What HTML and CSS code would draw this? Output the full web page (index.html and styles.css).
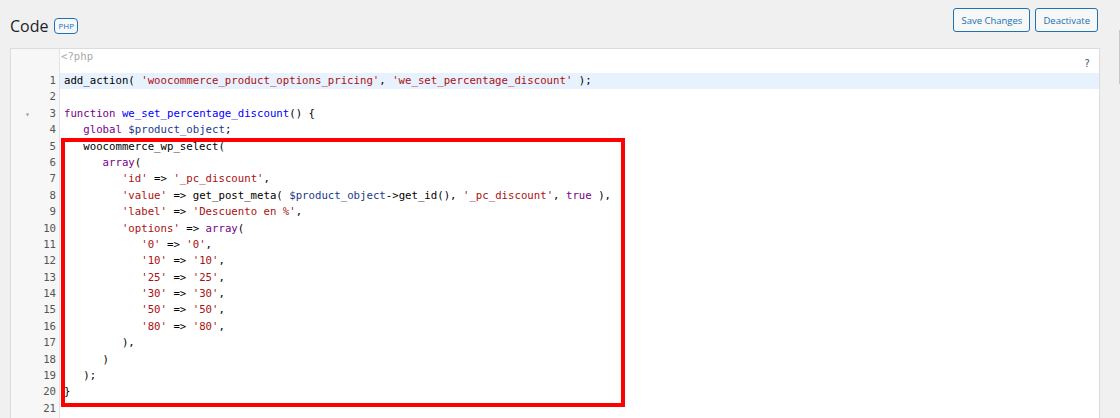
FILE: index.html
```html
<!DOCTYPE html>
<html lang="en">
<head>
    <meta charset="UTF-8">
    <meta name="viewport" content="width=device-width, initial-scale=1.0">
    <title>Code</title>
    <link rel="stylesheet" href="styles.css">
</head>
<body>

<div class="header">
    <div class="title">
        <h1>Code</h1>
        <span class="badge">PHP</span>
    </div>
    <div class="actions">
        <button class="button">Save Changes</button>
        <button class="button">Deactivate</button>
    </div>
</div>

<div class="editor">
    <div class="gutter">
        <div class="gutter-top"></div>
        <div class="num">1</div>
        <div class="num">2</div>
        <div class="num"><span class="fold">&#9662;</span>3</div>
        <div class="num">4</div>
        <div class="num">5</div>
        <div class="num">6</div>
        <div class="num">7</div>
        <div class="num">8</div>
        <div class="num">9</div>
        <div class="num">10</div>
        <div class="num">11</div>
        <div class="num">12</div>
        <div class="num">13</div>
        <div class="num">14</div>
        <div class="num">15</div>
        <div class="num">16</div>
        <div class="num">17</div>
        <div class="num">18</div>
        <div class="num">19</div>
        <div class="num">20</div>
        <div class="num">21</div>
        <div class="num">&nbsp;</div>
    </div>
    <div class="code">
        <div class="code-top">
            <span class="open-tag">&lt;?php</span>
            <span class="help">?</span>
        </div>
        <!-- lineas del snippet -->
        <pre class="line active">add_action( <span class="str">'woocommerce_product_options_pricing'</span>, <span class="str">'we_set_percentage_discount'</span> );</pre>
        <pre class="line"> </pre>
        <pre class="line"><span class="kw">function</span> <span class="def">we_set_percentage_discount</span>() {</pre>
        <pre class="line">   <span class="kw">global</span> <span class="var">$product_object</span>;</pre>
        <pre class="line">   woocommerce_wp_select(</pre>
        <pre class="line">      <span class="kw">array</span>(</pre>
        <pre class="line">         <span class="str">'id'</span> =&gt; <span class="str">'_pc_discount'</span>,</pre>
        <pre class="line">         <span class="str">'value'</span> =&gt; get_post_meta( <span class="var">$product_object</span>-&gt;get_id(), <span class="str">'_pc_discount'</span>, <span class="kw">true</span> ),</pre>
        <pre class="line">         <span class="str">'label'</span> =&gt; <span class="str">'Descuento en %'</span>,</pre>
        <pre class="line">         <span class="str">'options'</span> =&gt; <span class="kw">array</span>(</pre>
        <pre class="line">            <span class="str">'0'</span> =&gt; <span class="str">'0'</span>,</pre>
        <pre class="line">            <span class="str">'10'</span> =&gt; <span class="str">'10'</span>,</pre>
        <pre class="line">            <span class="str">'25'</span> =&gt; <span class="str">'25'</span>,</pre>
        <pre class="line">            <span class="str">'30'</span> =&gt; <span class="str">'30'</span>,</pre>
        <pre class="line">            <span class="str">'50'</span> =&gt; <span class="str">'50'</span>,</pre>
        <pre class="line">            <span class="str">'80'</span> =&gt; <span class="str">'80'</span>,</pre>
        <pre class="line">         ),</pre>
        <pre class="line">      )</pre>
        <pre class="line">   );</pre>
        <pre class="line">}</pre>
        <pre class="line"> </pre>
        <pre class="line"> </pre>
    </div>
    <!-- recuadro rojo de resaltado -->
    <div class="highlight-box"></div>
</div>

<div class="scroll-edge"></div>

</body>
</html>
```

FILE: styles.css
```css
/* Estilos base */
body {
    margin: 0;
    padding: 0;
    background-color: #f0f0f1;
    font-family: "Open Sans", Arial, sans-serif;
    color: #1d2327;
    overflow: hidden;
}

.header {
    display: flex;
    justify-content: space-between;
    align-items: flex-start;
    padding: 8px 22px 0 10px;
    height: 24px;
}

.title {
    display: flex;
    align-items: center;
    gap: 6px;
    margin-top: 9px;
}

.title h1 {
    margin: 0;
    font-size: 16px;
    font-weight: 400;
    line-height: 18px;
}

.badge {
    display: inline-block;
    border: 1px solid #2271b1;
    border-radius: 4px;
    color: #2271b1;
    background-color: #f6f9fc;
    font-size: 8px;
    line-height: 14px;
    padding: 0 3px;
    height: 14px;
}

.actions {
    display: flex;
    gap: 5px;
}

.button {
    font-family: "Open Sans", Arial, sans-serif;
    font-size: 9.5px;
    height: 24px;
    padding: 0 7px;
    border: 1px solid #2271b1;
    border-radius: 3px;
    background-color: #f6f7f7;
    color: #2271b1;
    cursor: pointer;
}

.editor {
    position: relative;
    display: flex;
    margin: 16px 20px 0 10px;
    background-color: #fff;
    border: 1px solid #dcdcde;
    box-shadow: 0 1px 1px rgba(0, 0, 0, 0.04);
}

.gutter {
    width: 48px;
    background-color: #f7f7f7;
    border-right: 1px solid #e2e2e2;
    font-family: "DejaVu Sans Mono", "Liberation Mono", monospace;
    font-size: 10.7px;
    color: #555;
}

.gutter-top {
    height: 24px;
}

.num {
    position: relative;
    height: 16.4px;
    line-height: 16.4px;
    text-align: right;
    padding-right: 3px;
}

.fold {
    position: absolute;
    left: 14px;
    top: 1px;
    font-size: 8px;
    color: #999;
}

.code {
    flex: 1;
    font-family: "DejaVu Sans Mono", "Liberation Mono", monospace;
    font-size: 10.7px;
}

.code-top {
    display: flex;
    justify-content: space-between;
    height: 24px;
    line-height: 16px;
}

.open-tag {
    color: #aaa;
    padding-left: 1px;
}

.help {
    color: #50575e;
    padding-right: 9px;
    padding-top: 7px;
    font-size: 10px;
}

.line {
    margin: 0;
    height: 16.4px;
    line-height: 16.4px;
    padding-left: 4px;
    font-family: inherit;
    font-size: inherit;
    color: #000;
    white-space: pre;
}

.line.active {
    background-color: #e8f2fe;
}

.kw { color: #770088; }
.def { color: #0000ff; }
.var { color: #1a3a8a; }
.str { color: #aa1111; }

.highlight-box {
    position: absolute;
    left: 50px;
    top: 89px;
    width: 556px;
    height: 261px;
    border: 4px solid #ff0000;
}

.scroll-edge {
    position: absolute;
    right: 0;
    top: 30px;
    width: 1px;
    height: 54px;
    background-color: #c8c8c8;
}
```
